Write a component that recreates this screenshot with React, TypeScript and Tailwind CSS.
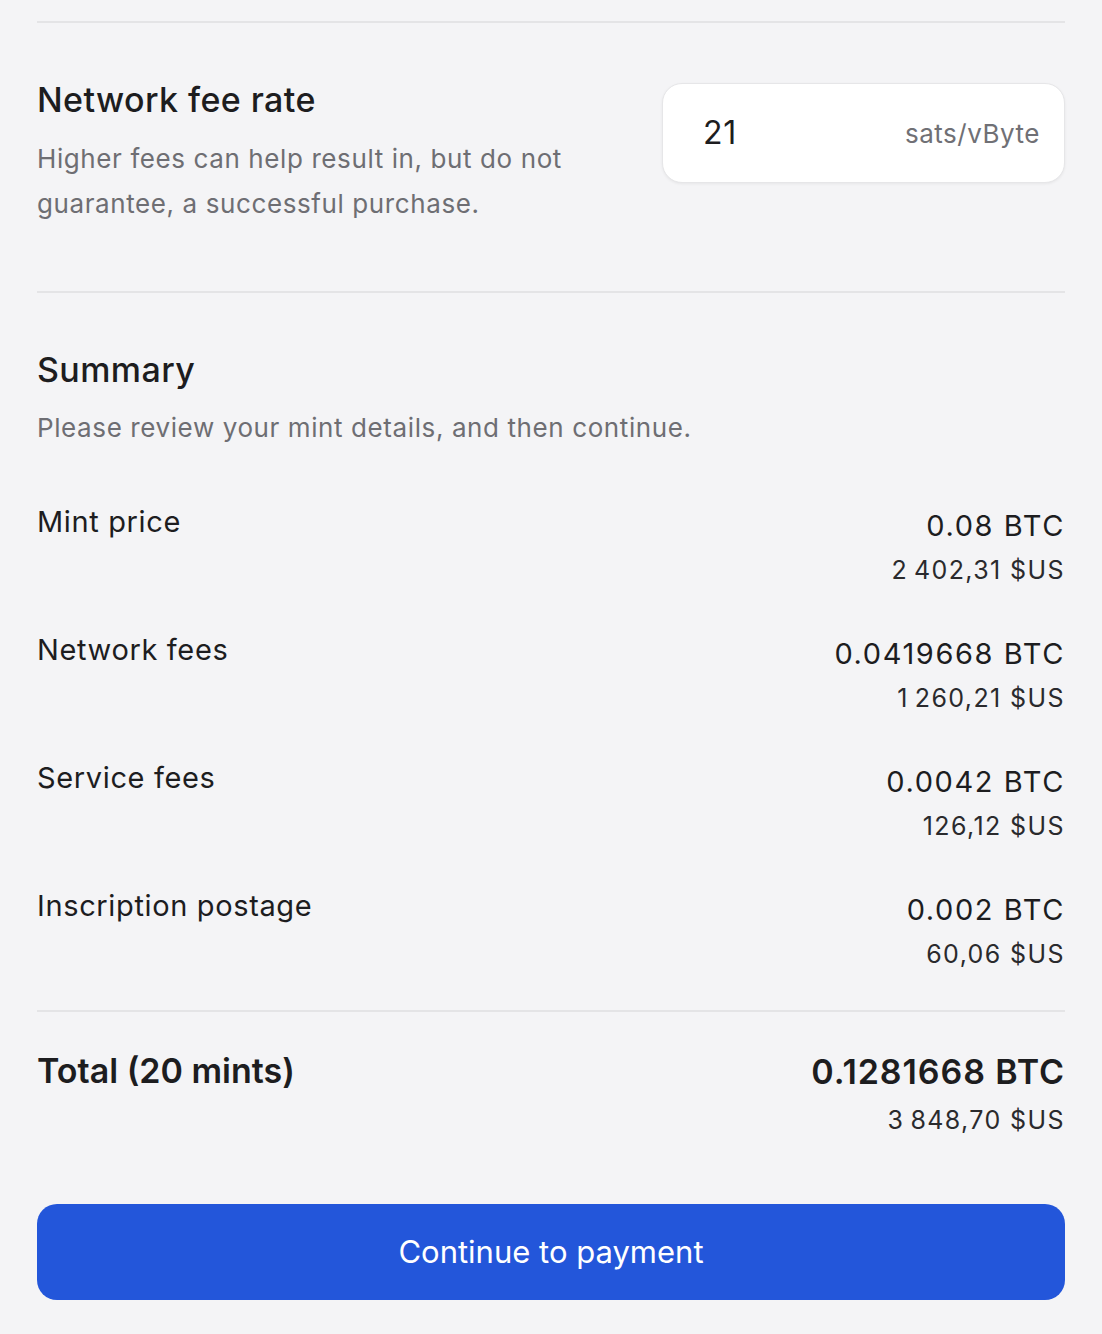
const rows = [
  { label: "Mint price", btc: "0.08 BTC", usd: "2\u202F402,31 $US" },
  { label: "Network fees", btc: "0.0419668 BTC", usd: "1\u202F260,21 $US" },
  { label: "Service fees", btc: "0.0042 BTC", usd: "126,12 $US" },
  { label: "Inscription postage", btc: "0.002 BTC", usd: "60,06 $US" },
];

export default function App() {
  return (
    <div
      className="min-h-screen bg-[#f4f4f6] px-[37px] pt-[21px] pb-[34px] text-[#1d1d1f]"
      style={{ fontFamily: "Inter, 'Noto Sans', sans-serif" }}
    >
      <div className="h-[2px] bg-[#e4e4e6]" />

      {/* fee rate */}
      <div className="mt-[56px] flex items-start justify-between">
        <div className="w-[580px]">
          <h2 className="text-[34px] leading-[42px] font-medium tracking-[0.012em]">Network fee rate</h2>
          <p className="mt-[15px] text-[26px] leading-[45px] tracking-[0.023em] text-[#6e6e73]">
            Higher fees can help result in, but do not
            <br />
            guarantee, a successful purchase.
          </p>
        </div>
        <div className="mt-[4px] flex h-[100px] w-[403px] items-center justify-between rounded-[20px] border border-[#e6e6e8] bg-white pl-[40px] pr-[24px] shadow-[0_1px_3px_rgba(0,0,0,0.06)]">
          <span className="text-[32px] tracking-[0.02em] text-[#1d1d1f]">21</span>
          <span className="text-[26px] tracking-[0.02em] text-[#707075]">sats/vByte</span>
        </div>
      </div>

      <div className="mt-[65px] h-[2px] bg-[#e4e4e6]" />

      {/* summary */}
      <h2 className="mt-[56px] text-[34px] leading-[42px] font-medium tracking-[0.012em]">Summary</h2>
      <p className="mt-[19px] text-[26px] leading-[36px] tracking-[0.023em] text-[#6e6e73]">
        Please review your mint details, and then continue.
      </p>

      <div className="mt-[58px] flex flex-col gap-[44px]">
        {rows.map((r) => (
          <div key={r.label} className="flex items-start justify-between">
            <span className="text-[29px] leading-[36px] tracking-[0.022em]">{r.label}</span>
            <div className="flex flex-col items-end pt-[4px]">
              <span className="text-[29px] leading-[36px] tracking-[0.055em]">{r.btc}</span>
              <span className="mt-[8px] text-[25px] leading-[36px] tracking-[0.056em] text-[#2a2a2d]">{r.usd}</span>
            </div>
          </div>
        ))}
      </div>

      <div className="mt-[38px] h-[2px] bg-[#e4e4e6]" />

      {/* total */}
      <div className="mt-[38px] flex items-start justify-between">
        <span className="text-[34px] leading-[42px] font-semibold">Total (20 mints)</span>
        <div className="flex flex-col items-end pt-[1px]">
          <span className="text-[34px] leading-[42px] font-semibold tracking-[0.027em]">0.1281668 BTC</span>
          <span className="mt-[9px] text-[25px] leading-[36px] tracking-[0.056em] text-[#2a2a2d]">3{"\u202F"}848,70 $US</span>
        </div>
      </div>

      <button className="mt-[66px] flex h-[96px] w-full items-center justify-center rounded-[20px] bg-[#2356da] text-[31px] text-white">
        Continue to payment
      </button>
    </div>
  );
}
